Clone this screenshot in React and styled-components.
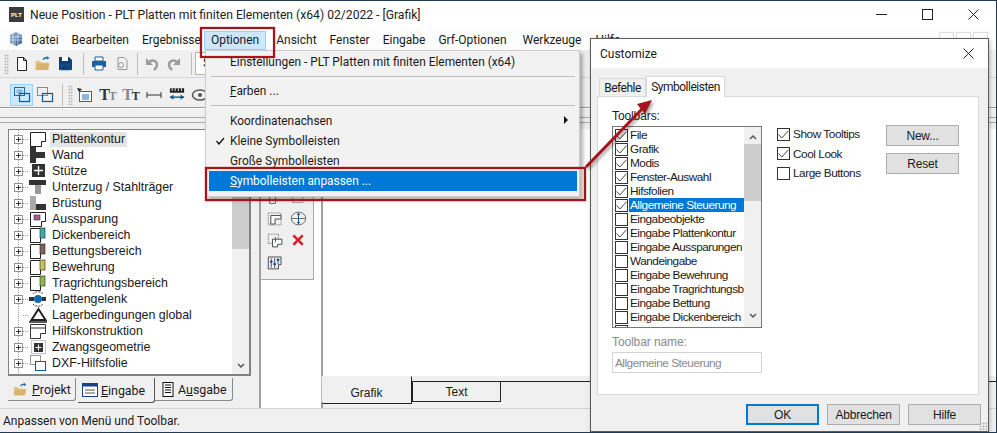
import React from "react";
import styled, { createGlobalStyle } from "styled-components";

const GlobalStyle = createGlobalStyle`
  html, body { margin: 0; padding: 0; background: #f0f0f0; overflow: hidden; }
  * { box-sizing: border-box; }
`;

const uiFont = `Roboto, "Liberation Sans", sans-serif`;
const treeFont = `"Liberation Sans", Arial, sans-serif`;

const Page = styled.div`
  position: relative;
  width: 997px;
  height: 433px;
  overflow: hidden;
  display: flex;
  flex-direction: column;
  background: #f0f0f0;
  border-top: 1px solid #1f3a52;
  border-bottom: 1px solid #1f3a52;
  border-right: 1px solid #1f3a52;
  font-family: ${uiFont};
  font-size: 12px;
  color: #1a1a1a;
`;
const TitleBar = styled.div`
  height: 27px;
  flex: none;
  display: flex;
  align-items: center;
  padding-left: 9px;
  background: #fff;
`;
const TitleLogo = styled.div`
  width: 15px;
  height: 15px;
  background: #3c3c3c;
  color: #fff;
  font: bold 6px ${treeFont};
  display: flex;
  align-items: center;
  justify-content: center;
  margin-right: 6px;
`;
const TitleText = styled.div`
  flex: 1;
  font-size: 12.15px;
  color: #222;
`;
const WinButton = styled.div`
  width: 46px;
  height: 27px;
  display: flex;
  align-items: center;
  justify-content: center;
`;
const MenuBar = styled.div`
  height: 22px;
  flex: none;
  display: flex;
  align-items: center;
  padding-left: 8px;
  background: #fdfdfd;
`;
const MenuLogo = styled.svg`
  width: 16px;
  height: 16px;
  flex: none;
`;
const MenuItem = styled.div`
  height: 19px;
  margin-top: 3px;
  line-height: 17px;
  padding: 0 6px;
  white-space: nowrap;
  border: 1px solid ${(p) => (p.$active ? "#99d1ff" : "transparent")};
  background: ${(p) => (p.$active ? "#cce8ff" : "transparent")};
  margin-left: ${(p) => p.$gap || 0}px;
`;
const MdiButtons = styled.div`
  margin-left: auto;
  margin-right: 8px;
  display: flex;
  gap: 2px;
  align-self: flex-start;
  margin-top: 4px;
`;
const MdiButton = styled.div`
  width: 15px;
  height: 15px;
  border: 1px solid #ddd;
`;
const ToolRow = styled.div`
  height: ${(p) => p.$h}px;
  flex: none;
  display: flex;
  align-items: center;
  padding: ${(p) => p.$top || 0}px 0 0 ${(p) => p.$left}px;
  border-bottom: 1px solid ${(p) => p.$line};
`;
const Grip = styled.div`
  width: 5px;
  height: 20px;
  flex: none;
  margin-right: ${(p) => p.$after || 0}px;
  background-image: radial-gradient(#b5b5b5 45%, transparent 50%);
  background-size: 2.5px 3px;
`;
const ToolSep = styled.div`
  width: 1px;
  height: 22px;
  flex: none;
  background: #bdbdbd;
  margin: 0 ${(p) => p.$r}px 0 ${(p) => p.$l}px;
`;
const ToolButton = styled.div`
  width: ${(p) => p.$w || 23}px;
  height: 22px;
  flex: none;
  display: flex;
  align-items: center;
  justify-content: center;
  border: 1px solid ${(p) => (p.$on ? "#99d1ff" : "transparent")};
  background: ${(p) => (p.$on ? "#cce8ff" : "transparent")};
`;
const ComboBox = styled.div`
  width: 200px;
  height: 23px;
  flex: none;
  background: #fff;
  border: 1px solid #b5b5b5;
  padding-left: 7px;
  line-height: 21px;
`;
const TypeGlyph = styled.span`
  font: bold 16px "Liberation Serif", serif;
  color: ${(p) => p.$c};
  letter-spacing: -1px;
  small { font-size: 12px; color: ${(p) => p.$c2}; }
`;
const Stripes = styled.div`
  height: 21px;
  flex: none;
  border-top: 1px solid #fff;
  background:
    linear-gradient(#a8a8a8, #a8a8a8) 0 8px / 100% 1px no-repeat,
    linear-gradient(#a8a8a8, #a8a8a8) 0 13px / 100% 1px no-repeat;
`;
const Workspace = styled.div`
  flex: 1;
  min-height: 0;
  display: flex;
`;
const LeftPane = styled.div`
  width: 259px;
  flex: none;
  padding-left: 8px;
  display: flex;
  flex-direction: column;
`;
const TreeFrame = styled.div`
  width: 243px;
  height: 247px;
  flex: none;
  display: flex;
  background: #fff;
  border: 1px solid #828282;
  border-width: 1px 2px 2px 1px;
  overflow: hidden;
`;
const TreeList = styled.div`
  flex: 1;
  padding-top: 1px;
  font: 12.4px ${treeFont};
  background:
    repeating-linear-gradient(#9a9a9a 0 1px, transparent 1px 2px) 9px 0 / 1px 100% no-repeat #fff;
`;
const TreeRow = styled.div`
  height: 16px;
  display: flex;
  align-items: center;
  white-space: nowrap;
`;
const Expander = styled.div`
  width: 9px;
  height: 9px;
  margin-left: 5px;
  flex: none;
  position: relative;
  background: ${(p) => (p.$hidden ? "transparent" : "#fff")};
  border: 1px solid ${(p) => (p.$hidden ? "transparent" : "#919191")};
  &::before {
    content: "";
    position: absolute;
    display: ${(p) => (p.$hidden ? "none" : "block")};
    left: 1px;
    right: 1px;
    top: 3px;
    height: 1px;
    background: #333;
  }
  &::after {
    content: "";
    position: absolute;
    display: ${(p) => (p.$hidden ? "none" : "block")};
    top: 1px;
    bottom: 1px;
    left: 3px;
    width: 1px;
    background: #333;
  }
`;
const Leader = styled.div`
  width: 6px;
  height: 1px;
  flex: none;
  background: repeating-linear-gradient(90deg, #9a9a9a 0 1px, transparent 1px 2px);
`;
const TreeIcon = styled.svg`
  width: 20px;
  height: 16px;
  flex: none;
  margin-right: 1px;
`;
const TreeLabel = styled.span`
  padding: 0 2px;
  height: 15px;
  line-height: 15px;
  background: ${(p) => (p.$selected ? "#e5e5e5" : "transparent")};
`;
const VScroll = styled.div`
  width: ${(p) => p.$w}px;
  flex: none;
  position: relative;
  background: #f0f0f0;
`;
const ScrollThumb = styled.div`
  position: absolute;
  left: 0;
  right: 0;
  top: ${(p) => p.$top}px;
  height: ${(p) => p.$h}px;
  background: #cdcdcd;
`;
const ScrollArrow = styled.svg`
  position: absolute;
  left: 50%;
  margin-left: -4px;
  width: 8px;
  height: 6px;
  ${(p) => (p.$up ? `top: ${p.$at}px;` : `bottom: ${p.$at}px;`)}
`;
const PaneTabs = styled.div`
  display: flex;
  padding-top: 2px;
  align-items: flex-start;
`;
const PaneTab = styled.div`
  height: ${(p) => (p.$active ? 25 : 23)}px;
  width: ${(p) => p.$w}px;
  flex: none;
  display: flex;
  align-items: center;
  padding-left: ${(p) => p.$pad}px;
  gap: ${(p) => p.$iconGap}px;
  white-space: nowrap;
  font-size: 12.4px;
  background: #f0f0f0;
  border-right: 1px solid ${(p) => (p.$active ? "#555" : "#8a8a8a")};
  border-bottom: 1px solid ${(p) => (p.$active ? "#555" : "#8a8a8a")};
  border-bottom-right-radius: 3px;
  margin-right: ${(p) => (p.$gap ? 2 : 0)}px;
  u { text-decoration: underline; }
`;
const PaletteCol = styled.div`
  width: 64px;
  flex: none;
  background: #fff;
  border-left: 2px solid #a0a0a0;
  border-right: 2px solid #a0a0a0;
`;
const Palette = styled.div`
  height: 151px;
  background: #f0f0f0;
  border-right: 1px solid #a8a8a8;
  border-bottom: 1px solid #a8a8a8;
  margin-right: 7px;
  display: flex;
  flex-direction: column;
  justify-content: flex-end;
  padding: 0 0 6px 6px;
`;
const PaletteRow = styled.div`
  display: flex;
  height: 21.7px;
  align-items: center;
  gap: 6px;
`;
const PaletteIcon = styled.svg`
  width: 17px;
  height: 17px;
  flex: none;
`;
const CenterCol = styled.div`
  flex: 1;
  display: flex;
  flex-direction: column;
  min-width: 0;
`;
const Canvas = styled.div`
  height: 247px;
  flex: none;
  background: #fff;
`;
const SheetTabs = styled.div`
  flex: 1;
  display: flex;
  align-items: flex-start;
  margin-left: -2px;
  background: linear-gradient(#222, #222) 0 5px / 100% 1px no-repeat;
`;
const SheetTab = styled.div`
  width: ${(p) => p.$w}px;
  height: ${(p) => (p.$active ? 28 : 21)}px;
  margin-top: ${(p) => (p.$active ? 0 : 5)}px;
  padding-top: ${(p) => (p.$active ? 6 : 0)}px;
  flex: none;
  display: flex;
  align-items: center;
  justify-content: center;
  font: 12px ${treeFont};
  background: #f0f0f0;
  border-bottom: 1px solid #222;
  border-left: 1px solid ${(p) => (p.$active ? "#bbb" : "#222")};
  border-right: 1px solid #222;
  border-top: 1px solid ${(p) => (p.$active ? "#f0f0f0" : "#222")};
  border-bottom-left-radius: ${(p) => (p.$active ? 3 : 0)}px;
`;
const StatusBar = styled.div`
  height: 24px;
  flex: none;
  display: flex;
  align-items: center;
  padding-left: 3px;
  border-top: 1px solid #d4d4d4;
`;

/* dropdown of the menu bar */
const Dropdown = styled.div`
  position: absolute;
  left: 205px;
  top: 49px;
  width: 375px;
  height: 147px;
  background: #f2f2f2;
  border: 1px solid #cccccc;
  box-shadow: 3px 3px 4px rgba(0, 0, 0, 0.3);
  padding: 0 2px 0 3px;
  font-size: 11.9px;
  z-index: 3;
`;
const DropItem = styled.div`
  height: ${(p) => p.$h || 20}px;
  padding-left: 21px;
  display: flex;
  align-items: center;
  position: relative;
  background: ${(p) => (p.$active ? "#0078d7" : "transparent")};
  color: ${(p) => (p.$active ? "#fff" : "#1a1a1a")};
  u { text-decoration: underline; }
`;
const DropCheck = styled.svg`
  position: absolute;
  left: 7px;
  top: 6px;
  width: 9px;
  height: 8px;
`;
const DropArrow = styled.div`
  position: absolute;
  right: 9px;
  top: 6px;
  width: 0;
  height: 0;
  border-left: 4px solid #111;
  border-top: 4px solid transparent;
  border-bottom: 4px solid transparent;
`;
const DropSep = styled.div`
  height: 1px;
  margin: 4px 2px;
  background: #bdbdbd;
`;

/* customize dialog */
const Dialog = styled.div`
  position: absolute;
  left: 590px;
  top: 37px;
  width: 399px;
  height: 394px;
  background: #f0f0f0;
  border: 1px solid #5b5b5b;
  box-shadow: 1px 2px 4px rgba(0, 0, 0, 0.25);
  z-index: 2;
  display: flex;
  flex-direction: column;
  font: 12px ${treeFont};
`;
const DialogHead = styled.div`
  height: 29px;
  flex: none;
  display: flex;
  align-items: center;
  justify-content: space-between;
  padding: 0 9px;
  background: #fff;
  font: 12px ${uiFont};
`;
const DialogTabs = styled.div`
  display: flex;
  align-items: flex-end;
  height: 28px;
  flex: none;
  padding-left: 8px;
  font: 12px ${uiFont};
  letter-spacing: -0.5px;
`;
const DialogTab = styled.div`
  height: ${(p) => (p.$active ? 21 : 18)}px;
  width: ${(p) => p.$w}px;
  flex: none;
  display: flex;
  align-items: center;
  justify-content: center;
  background: ${(p) => (p.$active ? "#fff" : "#f0f0f0")};
  border: 1px solid #d9d9d9;
  border-bottom: none;
  margin-bottom: ${(p) => (p.$active ? -1 : 0)}px;
  position: relative;
`;
const DialogPage = styled.div`
  height: 299px;
  flex: none;
  margin: 0 9px 0 6px;
  background: #fff;
  border: 1px solid #d9d9d9;
  display: flex;
  padding: 13px 20px 0 14px;
`;
const ListCol = styled.div`
  width: 150px;
  flex: none;
`;
const FieldLabel = styled.div`
  height: 12px;
  line-height: 12px;
  margin-bottom: 4px;
  font-size: 12px;
  letter-spacing: -0.1px;
  color: ${(p) => (p.$muted ? "#8a8a8a" : "#1a1a1a")};
`;
const ListBox = styled.div`
  height: 202px;
  display: flex;
  border: 1px solid #777;
  overflow: hidden;
  margin-bottom: 8px;
`;
const ListRows = styled.div`
  flex: 1;
  min-width: 0;
  padding-top: 1px;
  background: #fff;
`;
const ListRow = styled.div`
  height: 14px;
  display: flex;
  align-items: center;
  padding-left: 2px;
  gap: 1px;
  white-space: nowrap;
  overflow: hidden;
`;
const CheckBox = styled.div`
  width: 13px;
  height: 13px;
  flex: none;
  border: 1px solid #333;
  background: #fff;
  display: flex;
  align-items: center;
  justify-content: center;
`;
const ListText = styled.span`
  flex: 1;
  font-size: 11.8px;
  letter-spacing: -0.5px;
  line-height: 14px;
  padding-left: 1px;
  background: ${(p) => (p.$selected ? "#0078d7" : "transparent")};
  color: ${(p) => (p.$selected ? "#fff" : "#1a1a1a")};
`;
const NameInput = styled.div`
  height: 21px;
  border: 1px solid #d2d2d2;
  padding-left: 2px;
  display: flex;
  align-items: center;
  font-size: 11.8px;
  letter-spacing: -0.5px;
  color: #8a8a8a;
`;
const OptionCol = styled.div`
  width: 109px;
  flex: none;
  margin-left: 15px;
  padding-top: 17px;
  display: flex;
  flex-direction: column;
  gap: 5.5px;
`;
const OptionRow = styled.div`
  display: flex;
  align-items: center;
  gap: 3px;
  height: 14px;
  font-size: 11.8px;
  letter-spacing: -0.45px;
`;
const SideButtons = styled.div`
  padding-top: 15px;
  display: flex;
  flex-direction: column;
  gap: 7px;
`;
const DlgButton = styled.div`
  width: ${(p) => p.$w || 73}px;
  height: 21px;
  display: flex;
  align-items: center;
  justify-content: center;
  background: #e1e1e1;
  border: ${(p) => (p.$primary ? "2px solid #0078d7" : "1px solid #adadad")};
  font-size: 12px;
  letter-spacing: -0.2px;
`;
const DialogFoot = styled.div`
  display: flex;
  justify-content: flex-end;
  gap: 8px;
  padding: 9px 7px 0 0;
`;
const ResizeGrip = styled.div`
  position: absolute;
  right: 1px;
  bottom: 1px;
  width: 8px;
  height: 8px;
  background-image: radial-gradient(#b5b5b5 45%, transparent 50%);
  background-size: 3px 3px;
`;

/* red callouts over the screenshot */
const Callout = styled.div`
  position: absolute;
  left: ${(p) => p.$x}px;
  top: ${(p) => p.$y}px;
  width: ${(p) => p.$w}px;
  height: ${(p) => p.$h}px;
  border: 2px solid #a5131c;
  box-shadow: 0 0 1px #a5131c, inset 0 0 1px #a5131c;
  z-index: 4;
`;
const ArrowLayer = styled.svg`
  position: absolute;
  left: 575px;
  top: 90px;
  width: 95px;
  height: 90px;
  z-index: 5;
  overflow: visible;
`;

/* little drawings */
const NewDoc = () => (
  <svg width="14" height="16" viewBox="0 0 14 16"><path d="M2.5 1.5h6l3 3v10h-9z M8.5 1.5v3h3" fill="#fff" stroke="#222" /></svg>
);
const OpenFolder = ({ w = 16 }) => (
  <svg width={w} height="15" viewBox="0 0 18 16"><path d="M1 5h5l1 2h8v8H1z" fill="#e6c383" /><path d="M3 8h13l-2 7H1z" fill="#d9b36c" /><path d="M9 4c1-2 3-2.5 5-2" fill="none" stroke="#1f6aa5" strokeWidth="1.6" /><path d="M13 0l3 2-3 2z" fill="#1f6aa5" /></svg>
);
const Save = () => (
  <svg width="15" height="15" viewBox="0 0 15 15"><path d="M1 1h10l3 3v10H1z" fill="#0e3f75" /><path d="M4 1h6v4H4z" fill="#fff" /><path d="M3 9h9v5H3z" fill="#0e3f75" stroke="#2c6aa8" strokeWidth=".6" /></svg>
);
const Printer = () => (
  <svg width="16" height="15" viewBox="0 0 16 15"><path d="M4 1h8v4H4z" fill="#fff" stroke="#1f5f9a" /><rect x="1" y="5" width="14" height="6" fill="#1f5f9a" /><path d="M4 9h8v5H4z" fill="#fff" stroke="#1f5f9a" /></svg>
);
const Preview = () => (
  <svg width="14" height="15" viewBox="0 0 14 15"><path d="M3 1.5h6l3 3v9H3z" fill="none" stroke="#999" /><circle cx="6" cy="9" r="2.5" fill="none" stroke="#999" /></svg>
);
const Undo = ({ flip }) => (
  <svg width="14" height="14" viewBox="0 0 14 14" style={flip ? { transform: "scaleX(-1)" } : undefined}>
    <path d="M3 6c3-4 9-3 9 2 0 2-1 3-3 5" fill="none" stroke="#9c9c9c" strokeWidth="2.4" /><path d="M1 1v7h7z" fill="#9c9c9c" />
  </svg>
);
const LayerOn = ({ on }) => (
  <svg width="20" height="18" viewBox="0 0 20 18">
    <rect x="2.5" y="1.5" width="10" height="8" fill="none" stroke={on ? "#1f6aa5" : "#8a8a8a"} />
    {on && <rect x="4.5" y="3.5" width="6" height="4" fill="#8fb5d3" />}
    <rect x="7.5" y="7.5" width="10" height="8" fill="none" stroke="#0f5a96" strokeWidth="1.2" />
  </svg>
);
const NoteIcon = () => (
  <svg width="16" height="16" viewBox="0 0 16 16"><path d="M0 1l5 1-3 3z" fill="#222" /><rect x="2.5" y="4.5" width="12" height="10" fill="#fff" stroke="#1f6aa5" /><path d="M5 8h7M5 10h7M5 12h7" stroke="#1f6aa5" /></svg>
);
const DimIcon = () => (
  <svg width="16" height="10" viewBox="0 0 16 10"><path d="M1 5h14M1 2v6M15 2v6" stroke="#333" fill="none" /></svg>
);
const RulerIcon = () => (
  <svg width="16" height="15" viewBox="0 0 18 16"><path d="M1 1h16v5H1z" fill="#222" /><path d="M3.5 1v3M7 1v3M10.5 1v3M14 1v3" stroke="#fff" /><path d="M1 11h16" stroke="#0f5a96" strokeWidth="1.6" /><path d="M1 11l4-3v6zM17 11l-4-3v6z" fill="#0f5a96" /></svg>
);
const EyeIcon = () => (
  <svg width="18" height="14" viewBox="0 0 18 14"><ellipse cx="9" cy="7" rx="7.5" ry="5" fill="none" stroke="#555" strokeWidth="1.5" /><circle cx="9" cy="7" r="2" fill="#555" /></svg>
);
const Tick = () => (
  <svg width="11" height="9" viewBox="0 0 11 9"><path d="M0.5 4.5l3.3 3.5L10.5 0.7" fill="none" stroke="#444" /></svg>
);
const plate = "M1.5 1.5h15v9h-4v5h-11z";
const side = (c) => (
  <TreeIcon viewBox="0 0 20 16"><path d="M1.5 1.5h10v14h-10z" fill="#fff" stroke="#222" /><rect x="11" y="1" width="5" height="10" fill={c} stroke="#222" strokeWidth=".6" /></TreeIcon>
);
const treeIcons = {
  plate: <TreeIcon viewBox="0 0 20 16"><path d={plate} fill="#fff" stroke="#222" /></TreeIcon>,
  wall: <TreeIcon viewBox="0 0 20 16"><path d="M1 0h6v5h9v6H7v5H1z" fill="#333" /></TreeIcon>,
  column: <TreeIcon viewBox="0 0 20 16"><rect x="3" y="1" width="13" height="13" fill="#333" /><path d="M9.5 3v9M5 7.5h9" stroke="#fff" strokeWidth="1.4" /></TreeIcon>,
  beam: <TreeIcon viewBox="0 0 20 16"><rect x="0" y="1" width="17" height="5" fill="#333" /><rect x="6" y="6" width="6" height="9" fill="#999" /></TreeIcon>,
  parapet: <TreeIcon viewBox="0 0 20 16"><rect x="1" y="1" width="6" height="14" fill="#aaa" /><rect x="7" y="9" width="10" height="6" fill="#333" /></TreeIcon>,
  hole: <TreeIcon viewBox="0 0 20 16"><path d={plate} fill="#fff" stroke="#222" /><rect x="5" y="4" width="6" height="5" fill="#a85aa0" stroke="#333" strokeWidth=".6" /></TreeIcon>,
  thick: side("#35b0a8"),
  bed: side("#85605c"),
  rebar: side("#cfc050"),
  span: side("#8eb84a"),
  hinge: <TreeIcon viewBox="0 0 20 16"><path d="M4 3c2-3 8-3 10 0M4 13c2 3 8 3 10 0" fill="none" stroke="#444" strokeDasharray="2 1" /><rect x="0" y="6" width="5" height="4" fill="#333" /><circle cx="9" cy="8" r="4" fill="#0f6cb0" /><rect x="13" y="6" width="4" height="4" fill="#333" /></TreeIcon>,
  support: <TreeIcon viewBox="0 0 20 16"><path d="M9.5 2L2.5 13h14z" fill="none" stroke="#222" strokeWidth="2" /><path d="M0 15h18" stroke="#222" strokeWidth="1.5" /></TreeIcon>,
  aux: <TreeIcon viewBox="0 0 20 16"><path d="M1.5 1.5h15v9h-5v5h-10z M1.5 5h15" fill="#fff" stroke="#333" /></TreeIcon>,
  forced: <TreeIcon viewBox="0 0 20 16"><rect x="2.5" y="1.5" width="14" height="13" fill="none" stroke="#888" strokeDasharray="1 1" /><rect x="5" y="4" width="9" height="9" fill="#333" /><path d="M9.5 5.5v6M6.5 8.5h6" stroke="#fff" /></TreeIcon>,
  dxf: <TreeIcon viewBox="0 0 20 16"><rect x="1.5" y="0.5" width="10" height="9" fill="none" stroke="#999" /><rect x="6.5" y="6.5" width="10" height="9" fill="#fff" stroke="#0f5a96" /></TreeIcon>
};
const treeRows = [
  ["Plattenkontur", "plate"], ["Wand", "wall"], ["Stütze", "column"], ["Unterzug / Stahlträger", "beam"],
  ["Brüstung", "parapet"], ["Aussparung", "hole"], ["Dickenbereich", "thick"], ["Bettungsbereich", "bed"],
  ["Bewehrung", "rebar"], ["Tragrichtungsbereich", "span"], ["Plattengelenk", "hinge"],
  ["Lagerbedingungen global", "support"], ["Hilfskonstruktion", "aux"], ["Zwangsgeometrie", "forced"], ["DXF-Hilfsfolie", "dxf"]
];
const toolbarRows = [
  ["File", 1], ["Grafik", 1], ["Modis", 1], ["Fenster-Auswahl", 1], ["Hifsfolien", 1], ["Allgemeine Steuerung", 1],
  ["Eingabeobjekte", 0], ["Eingabe Plattenkontur", 1], ["Eingabe Aussparungen", 0], ["Wandeingabe", 0],
  ["Eingabe Bewehrung", 0], ["Eingabe Tragrichtungsb", 0], ["Eingabe Bettung", 0], ["Eingabe Dickenbereich", 0], ["", 0]
];
const Chevron = ({ up, at }) => (
  <ScrollArrow $up={up} $at={at} viewBox="0 0 8 6">
    <path d={up ? "M1 5l3-3 3 3" : "M1 1l3 3 3-3"} fill="none" stroke="#555" strokeWidth="1.5" />
  </ScrollArrow>
);

export default function App() {
  return (
    <>
      <GlobalStyle />
      <Page>
        <TitleBar>
          <TitleLogo>PLT</TitleLogo>
          <TitleText>Neue Position - PLT Platten mit finiten Elementen (x64) 02/2022 - [Grafik]</TitleText>
          <WinButton><svg width="11" height="11"><path d="M0 5.5h11" stroke="#222" /></svg></WinButton>
          <WinButton><svg width="11" height="11"><rect x=".5" y=".5" width="10" height="10" fill="none" stroke="#222" /></svg></WinButton>
          <WinButton><svg width="11" height="11"><path d="M.5.5l10 10M10.5.5l-10 10" stroke="#222" /></svg></WinButton>
        </TitleBar>
        <MenuBar>
          <MenuLogo viewBox="0 0 16 16">
            <path d="M8 1l6 3v8l-6 3-6-3V4z" fill="#7d9cc4" />
            <path d="M8 8l6-4v8l-6 3z" fill="#4f6f9f" />
            <path d="M2 6h12M2 9h12M5 2v12M10 2v12" stroke="#dfe7f1" strokeWidth=".7" />
          </MenuLogo>
          <MenuItem>Datei</MenuItem>
          <MenuItem $gap={-1}>Bearbeiten</MenuItem>
          <MenuItem $gap={-1}>Ergebnisse</MenuItem>
          <MenuItem $gap={-4} $active>Optionen</MenuItem>
          <MenuItem $gap={3}>Ansicht</MenuItem>
          <MenuItem $gap={-1}>Fenster</MenuItem>
          <MenuItem $gap={-1}>Eingabe</MenuItem>
          <MenuItem $gap={-1}>Grf-Optionen</MenuItem>
          <MenuItem $gap={2}>Werkzeuge</MenuItem>
          <MenuItem>Hilfe</MenuItem>
          <MdiButtons><MdiButton /><MdiButton /><MdiButton /></MdiButtons>
        </MenuBar>
        <ToolRow $h={28} $left={4} $line="#d8d8d8">
          <Grip $after={2} />
          <ToolButton $w={21}><NewDoc /></ToolButton>
          <ToolButton $w={21}><OpenFolder w={18} /></ToolButton>
          <ToolButton $w={24}><Save /></ToolButton>
          <ToolSep $l={6} $r={3} />
          <ToolButton><Printer /></ToolButton>
          <ToolButton><Preview /></ToolButton>
          <ToolSep $l={4} $r={3} />
          <ToolButton $w={22}><Undo /></ToolButton>
          <ToolButton $w={22}><Undo flip /></ToolButton>
          <ToolSep $l={6} $r={3} />
          <ComboBox>S</ComboBox>
        </ToolRow>
        <ToolRow $h={30} $left={10} $top={4} $line="#9a9a9a">
          <ToolButton $on><LayerOn on /></ToolButton>
          <ToolButton><LayerOn /></ToolButton>
          <ToolSep $l={6} $r={5} />
          <Grip />
          <ToolButton><NoteIcon /></ToolButton>
          <ToolButton><TypeGlyph $c="#333" $c2="#888">T<small>T</small></TypeGlyph></ToolButton>
          <ToolButton><TypeGlyph $c="#888" $c2="#333">T<small>T</small></TypeGlyph></ToolButton>
          <ToolButton><DimIcon /></ToolButton>
          <ToolButton><RulerIcon /></ToolButton>
          <ToolButton><EyeIcon /></ToolButton>
        </ToolRow>
        <Stripes />
        <Workspace>
          <LeftPane>
            <TreeFrame>
              <TreeList>
                {treeRows.map(([label, icon], i) => (
                  <TreeRow key={label}>
                    <Expander $hidden={icon === "support"} />
                    <Leader />
                    {treeIcons[icon]}
                    <TreeLabel $selected={i === 0}>{label}</TreeLabel>
                  </TreeRow>
                ))}
              </TreeList>
              <VScroll $w={17}>
                <ScrollThumb $top={10} $h={109} />
                <Chevron at={5} />
              </VScroll>
            </TreeFrame>
            <PaneTabs>
              <PaneTab $w={68} $gap $pad={5} $iconGap={4}>
                <OpenFolder w={15} /><span><u>P</u>rojekt</span>
              </PaneTab>
              <PaneTab $w={77} $active $pad={4} $iconGap={3}>
                <svg width="16" height="14" viewBox="0 0 16 14"><rect x=".5" y=".5" width="15" height="13" fill="#fff" stroke="#1b3f8f" /><rect x="1" y="1" width="14" height="2.5" fill="#1b3f8f" /><path d="M3 7h10M3 10h10" stroke="#555" /></svg>
                <span><u>E</u>ingabe</span>
              </PaneTab>
              <PaneTab $w={78} $pad={7} $iconGap={4}>
                <svg width="12" height="15" viewBox="0 0 12 15"><rect x="1" y=".5" width="10" height="14" fill="#fff" stroke="#111" /><path d="M3 3h6M3 5.5h6M3 8h6M3 10.5h6" stroke="#111" /></svg>
                <span>A<u>u</u>sgabe</span>
              </PaneTab>
            </PaneTabs>
          </LeftPane>
          <PaletteCol>
            <Palette>
              <PaletteRow>
                <PaletteIcon viewBox="0 0 20 20"><path d="M3 2h14v6h-7v9H3z" fill="none" stroke="#555" /><circle cx="14" cy="3" r="1.5" fill="#123" /></PaletteIcon>
                <PaletteIcon viewBox="0 0 20 20"><rect x="3" y="2" width="12" height="14" fill="none" stroke="#999" /></PaletteIcon>
              </PaletteRow>
              <PaletteRow>
                <PaletteIcon viewBox="0 0 20 20"><rect x="1.5" y="3.5" width="15" height="14" fill="none" stroke="#777" strokeDasharray="2 1" /><path d="M4.5 16.5v-10h12v4h-7v6z" fill="#fff" stroke="#333" /></PaletteIcon>
                <PaletteIcon viewBox="0 0 20 20"><ellipse cx="10" cy="10" rx="8.5" ry="7.5" fill="none" stroke="#555" /><path d="M2 10h16" stroke="#555" /><path d="M10 4v12" stroke="#0f5a96" strokeWidth="1.2" /><path d="M8 6l2-3 2 3zM8 14l2 3 2-3z" fill="#0f5a96" /></PaletteIcon>
              </PaletteRow>
              <PaletteRow>
                <PaletteIcon viewBox="0 0 20 20"><rect x="1.5" y="2.5" width="12" height="11" fill="none" stroke="#777" strokeDasharray="2 1" /><path d="M6.5 8.5h11v6h-5v3h-6z" fill="#fff" stroke="#333" /><path d="M10 6v6" stroke="#0f5a96" /></PaletteIcon>
                <PaletteIcon viewBox="0 0 20 20"><path d="M4 4l11 11M15 4L4 15" stroke="#d8202c" strokeWidth="3" /></PaletteIcon>
              </PaletteRow>
              <PaletteRow>
                <PaletteIcon viewBox="0 0 20 20"><path d="M1.5 3.5h15v9h-3v5h-12z" fill="none" stroke="#333" /><path d="M5 5v11M9 5v11M13 5v7" stroke="#0f3f6f" /><path d="M3.5 9h3M7.5 12h3M11.5 7h3" stroke="#0f3f6f" strokeWidth="2" /></PaletteIcon>
              </PaletteRow>
            </Palette>
          </PaletteCol>
          <CenterCol>
            <Canvas />
            <SheetTabs>
              <SheetTab $w={91} $active>Grafik</SheetTab>
              <SheetTab $w={89}>Text</SheetTab>
            </SheetTabs>
          </CenterCol>
        </Workspace>
        <StatusBar>Anpassen von Menü und Toolbar.</StatusBar>

        <Dropdown>
          <DropItem $h={21}>Einstellungen - PLT Platten mit finiten Elementen (x64)</DropItem>
          <DropSep />
          <DropItem><span><u>F</u>arben ...</span></DropItem>
          <DropSep />
          <DropItem $h={21}>Koordinatenachsen<DropArrow /></DropItem>
          <DropItem><DropCheck viewBox="0 0 9 8"><path d="M.5 4l2.5 3 5-6" fill="none" stroke="#111" strokeWidth="1.3" /></DropCheck>Kleine Symbolleisten</DropItem>
          <DropItem>Große Symbolleisten</DropItem>
          <DropItem $active><span><u>S</u>ymbolleisten anpassen ...</span></DropItem>
        </Dropdown>

        <Dialog>
          <DialogHead>
            <span>Customize</span>
            <svg width="11" height="11" style={{ marginRight: 5 }}><path d="M.5.5l10 10M10.5.5l-10 10" stroke="#222" /></svg>
          </DialogHead>
          <DialogTabs>
            <DialogTab $w={47}>Befehle</DialogTab>
            <DialogTab $w={79} $active>Symbolleisten</DialogTab>
          </DialogTabs>
          <DialogPage>
            <ListCol>
              <FieldLabel>Toolbars:</FieldLabel>
              <ListBox>
                <ListRows>
                  {toolbarRows.map(([name, checked], i) => (
                    <ListRow key={i}>
                      <CheckBox>{checked ? <Tick /> : null}</CheckBox>
                      <ListText $selected={i === 5}>{name}</ListText>
                    </ListRow>
                  ))}
                </ListRows>
                <VScroll $w={17}>
                  <ScrollThumb $top={17} $h={57} />
                  <Chevron up at={7} />
                  <Chevron at={8} />
                </VScroll>
              </ListBox>
              <FieldLabel $muted>Toolbar name:</FieldLabel>
              <NameInput>Allgemeine Steuerung</NameInput>
            </ListCol>
            <OptionCol>
              <OptionRow><CheckBox><Tick /></CheckBox>Show Tooltips</OptionRow>
              <OptionRow><CheckBox><Tick /></CheckBox>Cool Look</OptionRow>
              <OptionRow><CheckBox />Large Buttons</OptionRow>
            </OptionCol>
            <SideButtons>
              <DlgButton>New...</DlgButton>
              <DlgButton>Reset</DlgButton>
            </SideButtons>
          </DialogPage>
          <DialogFoot>
            <DlgButton $primary>OK</DlgButton>
            <DlgButton>Abbrechen</DlgButton>
            <DlgButton>Hilfe</DlgButton>
          </DialogFoot>
          <ResizeGrip />
        </Dialog>

        <Callout $x={200} $y={26} $w={75} $h={31} />
        <Callout $x={205} $y={166} $w={381} $h={34} />
        <ArrowLayer viewBox="575 90 95 90">
          <defs>
            <filter id="arrowShadow" x="-20%" y="-20%" width="150%" height="150%">
              <feDropShadow dx="2" dy="2" stdDeviation="1.5" floodColor="#000" floodOpacity="0.35" />
            </filter>
          </defs>
          <g filter="url(#arrowShadow)">
            <path d="M586 166L642 108" stroke="#a5131c" strokeWidth="3" fill="none" />
            <path d="M652 99L637 103L645 113z" fill="#a5131c" />
          </g>
        </ArrowLayer>
      </Page>
    </>
  );
}
